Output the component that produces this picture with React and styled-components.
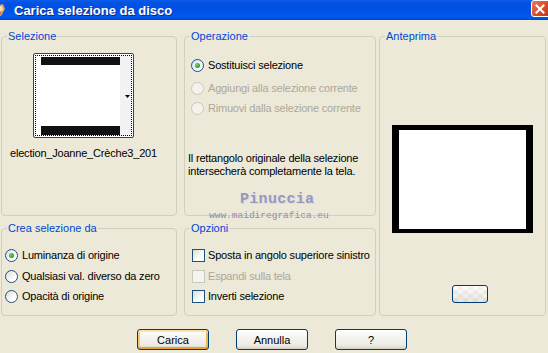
import React from "react";
import styled, { createGlobalStyle, css } from "styled-components";

const GlobalStyle = createGlobalStyle`
  html, body { margin: 0; padding: 0; background: #ECE9D8; }
  body { font-family: "Liberation Sans", Arial, sans-serif; font-size: 11px; }
`;

const Window = styled.div`
  position: relative;
  width: 548px;
  height: 353px;
  background: #ECE9D8;
  overflow: hidden;
  color: #000;
`;

const TitleBar = styled.div`
  height: 20px;
  display: flex;
  align-items: center;
  background: linear-gradient(to bottom, #0A5DE8 0%, #0352E6 15%, #0050E4 50%, #0159F0 85%, #0045C8 100%);
`;

const TitleIcon = styled.svg`
  width: 10px;
  height: 14px;
  margin-left: -4px;
  flex: none;
`;

const TitleText = styled.div`
  margin-left: 8px;
  color: #fff;
  font-weight: bold;
  font-size: 13px;
  text-shadow: 1px 1px 0 #0A2A8A;
  flex: 1;
`;

const CloseButton = styled.div`
  width: 18px;
  height: 17px;
  margin-top: -3px;
  margin-right: -1px;
  box-sizing: border-box;
  border: 1px solid #fff;
  border-radius: 3px 0 0 3px;
  background: linear-gradient(135deg, #E87A5A 0%, #D8492A 60%, #C03A1E 100%);
  display: flex;
  align-items: center;
  justify-content: center;
`;

const Body = styled.div`
  padding-top: 10px;
  letter-spacing: -0.2px;
`;

const Panels = styled.div`
  display: grid;
  grid-template-columns: 1px 176px 7px 192px 3px 167px;
  grid-template-rows: 186px 94px;
  row-gap: 6px;
  grid-template-areas:
    ". sel . op . prev"
    ". crea . opz . prev";
`;

const Group = styled.fieldset`
  grid-area: ${(p) => p.$area};
  margin: 0;
  padding: 0;
  border: 1px solid #D0D0BF;
  border-radius: 4px;
  min-width: 0;
  box-sizing: border-box;
`;

const Legend = styled.legend`
  margin-left: 5px;
  padding: 0 1px;
  color: #0046D5;
  font-size: 11px;
  line-height: 13px;
  letter-spacing: 0;
`;

const Content = styled.div`
  display: flex;
  flex-direction: column;
  align-items: flex-start;
  padding: ${(p) => p.$pad};
`;

const Thumb = styled.div`
  width: 101px;
  height: 85px;
  box-sizing: border-box;
  border: 1px solid #1C4A7A;
  border-radius: 2px;
  background: #fff;
  padding: 1px;
  margin-left: 31px;
`;

const ThumbInner = styled.div`
  width: 100%;
  height: 100%;
  box-sizing: border-box;
  border: 1px dotted #000;
  display: flex;
`;

const FileName = styled.div`
  margin-top: 9px;
  margin-left: 8px;
  line-height: 13px;
  white-space: nowrap;
`;

const Row = styled.label`
  display: flex;
  align-items: center;
  height: 16px;
  gap: 4px;
  margin-top: ${(p) => p.$mt || 0}px;
  padding-left: ${(p) => p.$indent || 0}px;
  color: ${(p) => (p.$disabled ? "#ACA899" : "#000")};
  white-space: nowrap;
`;

const Radio = styled.span`
  width: 13px;
  height: 13px;
  box-sizing: border-box;
  border-radius: 50%;
  flex: none;
  display: flex;
  align-items: center;
  justify-content: center;
  ${(p) =>
    p.$disabled
      ? css`
          border: 1px solid #CAC8BB;
          background: #F4F3EE;
        `
      : css`
          border: 1px solid #1C5180;
          background: linear-gradient(135deg, #DCDCD6 0%, #FFFFFF 70%);
        `}
  &::after {
    content: "";
    display: ${(p) => (p.$checked ? "block" : "none")};
    width: 5px;
    height: 5px;
    border-radius: 50%;
    background: radial-gradient(circle at 35% 35%, #6CD86C, #21A121 70%);
  }
`;

const Check = styled.span`
  width: 13px;
  height: 13px;
  box-sizing: border-box;
  flex: none;
  margin-right: -1px;
  ${(p) =>
    p.$disabled
      ? css`
          border: 1px solid #CAC8BB;
          background: #F4F3EE;
        `
      : css`
          border: 1px solid #1C5180;
          background: linear-gradient(135deg, #DCDCD6 0%, #FFFFFF 70%);
        `}
`;

const Note = styled.p`
  margin: 36px 0 0 3px;
  line-height: 13.4px;
`;

const Preview = styled.div`
  margin-top: 82px;
  width: 141px;
  height: 108px;
  box-sizing: border-box;
  border-style: solid;
  border-color: #000;
  border-width: 5px 7px 4px 7px;
  background: #fff;
`;

const SmallButton = styled.div`
  margin-top: 52px;
  margin-left: 60px;
  width: 36px;
  height: 18px;
  box-sizing: border-box;
  border: 1px solid #003C74;
  border-radius: 3px;
  background:
    linear-gradient(to bottom, rgba(255,255,255,0.6), rgba(214,208,197,0.5)),
    repeating-conic-gradient(#E6E4DC 0% 25%, #FDFDFB 0% 50%) 0 0 / 10px 8px;
`;

const ButtonRow = styled.div`
  display: flex;
  justify-content: center;
  gap: 27px;
  margin-top: 13px;
  padding-right: 4px;
`;

const Button = styled.button`
  width: 72px;
  height: 21px;
  padding: 0;
  box-sizing: border-box;
  border: 1px solid #003C74;
  border-radius: 3px;
  background: linear-gradient(to bottom, #FFFFFF 0%, #F4F3EE 40%, #ECEBE6 80%, #D6D0C5 100%);
  font-family: "Liberation Sans", Arial, sans-serif;
  font-size: 11px;
  color: #000;
  ${(p) =>
    p.$default &&
    css`
      box-shadow: inset 0 2px 0 #FFE2A8, inset 0 -2px 0 #E5A13A, inset 2px 0 0 #F9C66E, inset -2px 0 0 #F0B652;
    `}
`;

const Watermark = styled.div`
  position: absolute;
  left: 209px;
  top: 191px;
  display: flex;
  flex-direction: column;
  align-items: flex-start;
  pointer-events: none;
`;

const WmName = styled.div`
  margin-left: 31px;
  font-family: "Liberation Mono", monospace;
  font-weight: bold;
  font-size: 15px;
  line-height: 17px;
  letter-spacing: 0.3px;
  color: #9898BC;
  text-shadow: 1px 1px 0 #DCDAE6;
`;

const WmUrl = styled.div`
  font-family: "Liberation Mono", monospace;
  font-size: 9.5px;
  line-height: 12px;
  margin-top: 2px;
  color: #8E8EB0;
`;

export default function App() {
  return (
    <>
      <GlobalStyle />
      <Window>
        <TitleBar>
          <TitleIcon viewBox="0 0 10 14">
            <path d="M0 3 L7 1 L9 6 L5 13 L0 12 Z" fill="#E2A05A" />
            <path d="M2 4 L6 3 L7 7 L3 9 Z" fill="#F6E2B8" />
            <path d="M1 10 L5 9 L4 12 Z" fill="#B2542A" />
          </TitleIcon>
          <TitleText>Carica selezione da disco</TitleText>
          <CloseButton>
            <svg width="10" height="10" viewBox="0 0 10 10">
              <path d="M1.5 1.5 L8.5 8.5 M8.5 1.5 L1.5 8.5" stroke="#fff" strokeWidth="2" strokeLinecap="square" />
            </svg>
          </CloseButton>
        </TitleBar>
        <Body>
          <Panels>
            <Group $area="sel">
              <Legend>Selezione</Legend>
              <Content $pad="10px 0 0 0">
                <Thumb>
                  <ThumbInner>
                    <svg width="95" height="79" viewBox="0 0 95 79">
                      <rect x="0" y="0" width="95" height="79" fill="#fff" />
                      <rect x="84" y="0" width="11" height="79" fill="#F2F2F2" />
                      <rect x="5" y="1" width="79" height="8" fill="#111" />
                      <rect x="5" y="70" width="79" height="9" fill="#111" />
                      <path d="M89 39 L94 39 L91.5 42 Z" fill="#000" />
                    </svg>
                  </ThumbInner>
                </Thumb>
                <FileName>election_Joanne_Crèche3_201</FileName>
              </Content>
            </Group>

            <Group $area="op">
              <Legend>Operazione</Legend>
              <Content $pad="14px 0 0 0">
                <Row $indent={6}>
                  <Radio $checked />
                  Sostituisci selezione
                </Row>
                <Row $mt={7} $indent={6} $disabled>
                  <Radio $disabled />
                  Aggiungi alla selezione corrente
                </Row>
                <Row $mt={4} $indent={6} $disabled>
                  <Radio $disabled />
                  Rimuovi dalla selezione corrente
                </Row>
                <Note>
                  Il rettangolo originale della selezione
                  <br />
                  intersecherà completamente la tela.
                </Note>
              </Content>
            </Group>

            <Group $area="prev">
              <Legend>Anteprima</Legend>
              <Content $pad="0 0 0 12px">
                <Preview />
                <SmallButton />
              </Content>
            </Group>

            <Group $area="crea">
              <Legend>Crea selezione da</Legend>
              <Content $pad="12px 0 0 3px">
                <Row>
                  <Radio $checked />
                  Luminanza di origine
                </Row>
                <Row $mt={5}>
                  <Radio />
                  Qualsiasi val. diverso da zero
                </Row>
                <Row $mt={4}>
                  <Radio />
                  Opacità di origine
                </Row>
              </Content>
            </Group>

            <Group $area="opz">
              <Legend>Opzioni</Legend>
              <Content $pad="12px 0 0 7px">
                <Row>
                  <Check />
                  Sposta in angolo superiore sinistro
                </Row>
                <Row $mt={5} $disabled>
                  <Check $disabled />
                  Espandi sulla tela
                </Row>
                <Row $mt={4}>
                  <Check />
                  Inverti selezione
                </Row>
              </Content>
            </Group>
          </Panels>
          <ButtonRow>
            <Button $default>Carica</Button>
            <Button>Annulla</Button>
            <Button>?</Button>
          </ButtonRow>
        </Body>
        <Watermark>
          <WmName>Pinuccia</WmName>
          <WmUrl>www.maidiregrafica.eu</WmUrl>
        </Watermark>
      </Window>
    </>
  );
}
